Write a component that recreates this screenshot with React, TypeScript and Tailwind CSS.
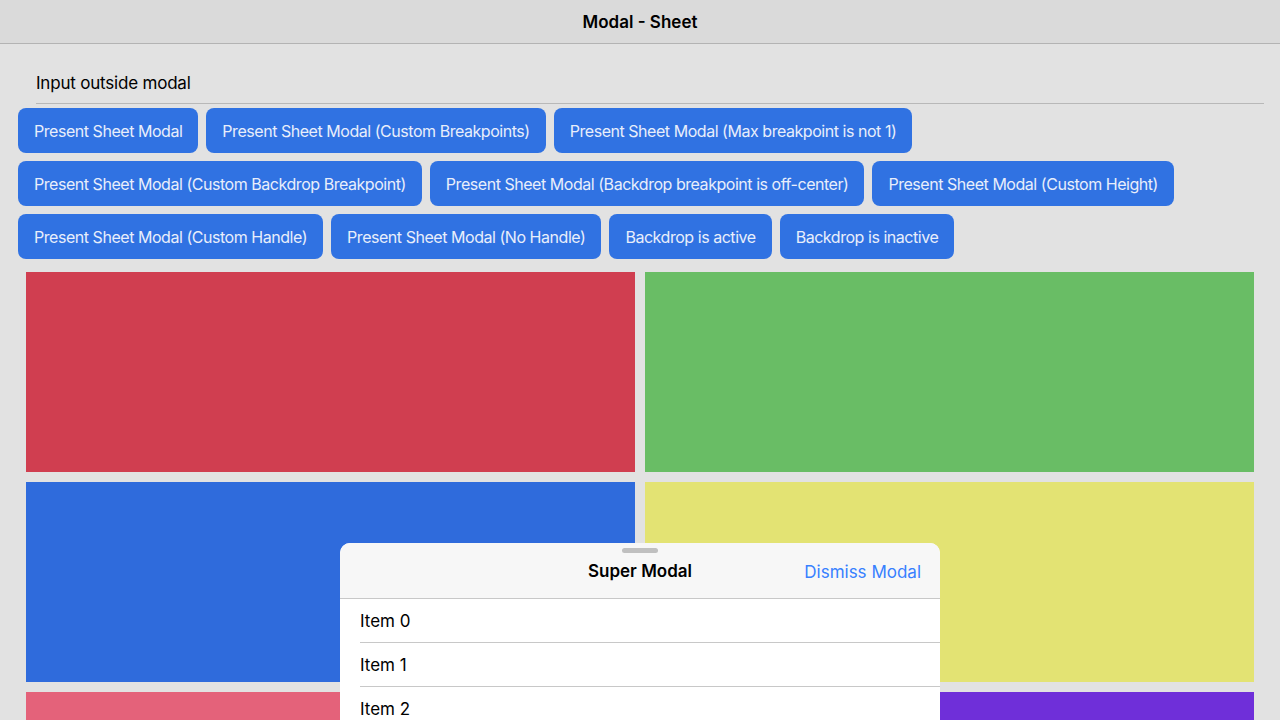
import React from "react";

const buttons: string[][] = [
  [
    "Present Sheet Modal",
    "Present Sheet Modal (Custom Breakpoints)",
    "Present Sheet Modal (Max breakpoint is not 1)",
  ],
  [
    "Present Sheet Modal (Custom Backdrop Breakpoint)",
    "Present Sheet Modal (Backdrop breakpoint is off-center)",
    "Present Sheet Modal (Custom Height)",
  ],
  [
    "Present Sheet Modal (Custom Handle)",
    "Present Sheet Modal (No Handle)",
    "Backdrop is active",
    "Backdrop is inactive",
  ],
];

const boxes = [
  "bg-[#d03e50]",
  "bg-[#69bd65]",
  "bg-[#2f6bdc]",
  "bg-[#e3e373]",
  "bg-[#e4627a]",
  "bg-[#6f2fd9]",
];

const App: React.FC = () => {
  return (
    <div
      className="relative w-[1280px] h-[720px] overflow-hidden bg-[#e2e2e2] text-black"
      style={{ fontFamily: "Inter, 'Liberation Sans', sans-serif" }}
    >
      {/* Toolbar */}
      <div className="h-[44px] bg-[#dadada] border-b border-[#b3b3b3] flex items-center justify-center">
        <span className="text-[17px] font-semibold pt-[3px]">Modal - Sheet</span>
      </div>

      {/* Input */}
      <div className="pl-[36px] pr-[16px] pt-[16px]">
        <div className="h-[44px] flex items-center border-b border-[#b8b8b8] text-[17px] tracking-[-0.2px] pt-[4px]">
          Input outside modal
        </div>
      </div>

      {/* Buttons */}
      <div className="px-[18px] pt-[4px] flex flex-col gap-[8px]">
        {buttons.map((row, i) => (
          <div key={i} className="flex gap-[8px]">
            {row.map((label) => (
              <button
                key={label}
                className="h-[45px] px-[16px] rounded-[8px] bg-[#3072e2] text-[#e8eefb] text-[16px] tracking-[-0.46px] whitespace-nowrap"
              >
                {label}
              </button>
            ))}
          </div>
        ))}
      </div>

      {/* Colour grid */}
      <div className="px-[26px] pt-[13px] grid grid-cols-2 gap-[10px]">
        {boxes.map((c, i) => (
          <div key={i} className={`h-[200px] ${c}`} />
        ))}
      </div>

      {/* Sheet modal */}
      <div className="absolute left-[340px] top-[543px] w-[600px] h-[200px] rounded-t-[10px] overflow-hidden bg-white">
        <div className="relative h-[56px] bg-[#f7f7f7] border-b border-[#c8c8c8] flex items-center justify-center">
          <div className="absolute top-[5px] left-[282px] w-[36px] h-[5px] rounded-full bg-[#c0c0c0]" />
          <span className="text-[17px] font-semibold pt-[3px]">Super Modal</span>
          <span className="absolute right-[19px] top-[17px] text-[17px] text-[#3880ff]">
            Dismiss Modal
          </span>
        </div>
        <div className="pl-[20px]">
          {[0, 1, 2, 3].map((n) => (
            <div
              key={n}
              className="h-[44px] flex items-center border-b border-[#c8c8c8] text-[17px] pt-[2px]"
            >
              Item {n}
            </div>
          ))}
        </div>
      </div>
    </div>
  );
};

export default App;
